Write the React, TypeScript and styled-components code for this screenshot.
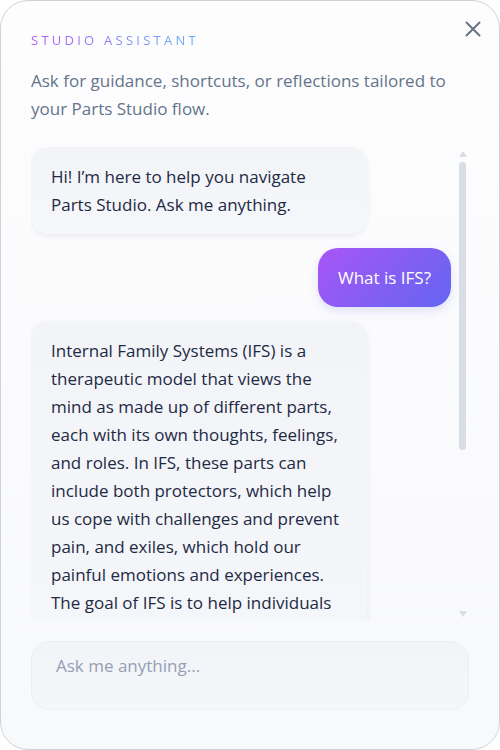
import styled, { createGlobalStyle } from "styled-components";
import { X } from "lucide-react";

const GlobalStyle = createGlobalStyle`
  html, body {
    margin: 0;
    padding: 0;
    background: #ffffff;
  }
  body {
    font-family: "Open Sans", "Noto Sans", sans-serif;
  }
  * {
    box-sizing: border-box;
  }
`;

const Panel = styled.section`
  position: relative;
  width: 500px;
  height: 750px;
  display: flex;
  flex-direction: column;
  padding: 30px 30px 39px;
  border: 1px solid #cfd3d9;
  border-radius: 28px;
  background: linear-gradient(180deg, #fdfdfe 0%, #f8f9fb 100%);
  overflow: hidden;
`;

const Header = styled.header`
  display: flex;
  flex-direction: column;
  gap: 18px;
`;

const Title = styled.h2`
  margin: 0;
  font-size: 13px;
  font-weight: 400;
  letter-spacing: 0.25em;
  line-height: 18px;
  text-transform: uppercase;
  background: linear-gradient(90deg, #b259f7 0%, #5fb2f8 100%);
  -webkit-background-clip: text;
  background-clip: text;
  color: transparent;
  width: fit-content;
`;

const Subtitle = styled.p`
  margin: 0;
  font-size: 17px;
  line-height: 28px;
  color: #64748b;
`;

const CloseButton = styled.button`
  position: absolute;
  top: 15px;
  right: 13px;
  width: 26px;
  height: 26px;
  padding: 0;
  border: none;
  background: none;
  color: #687385;
  display: flex;
  align-items: center;
  justify-content: center;
  cursor: pointer;
`;

const MessagesFrame = styled.div`
  position: relative;
  flex: 1;
  min-height: 0;
  margin-top: 24px;
  display: flex;
`;

const Messages = styled.div`
  flex: 1;
  padding-right: 18px;
  display: flex;
  flex-direction: column;
  gap: 14px;
  overflow-y: auto;
  scrollbar-width: none;
  &::-webkit-scrollbar {
    display: none;
  }
`;

const ScrollRail = styled.div`
  position: absolute;
  top: 4px;
  bottom: 4px;
  right: 2px;
  width: 9px;
  display: flex;
  flex-direction: column;
  align-items: center;
  pointer-events: none;
`;

const ScrollArrow = styled.span<{ $down?: boolean }>`
  width: 0;
  height: 0;
  border-left: 4.5px solid transparent;
  border-right: 4.5px solid transparent;
  ${(p) =>
    p.$down
      ? "border-top: 6px solid #d9dee6; margin-top: auto;"
      : "border-bottom: 6px solid #d9dee6;"}
`;

const ScrollThumb = styled.span`
  margin-top: 5px;
  width: 7px;
  height: 288px;
  border-radius: 4px;
  background: #d9dee6;
`;

const Bubble = styled.div<{ $mine?: boolean }>`
  flex-shrink: 0;
  max-width: 80%;
  align-self: ${(p) => (p.$mine ? "flex-end" : "flex-start")};
  padding: 16px 20px 15px;
  border-radius: ${(p) => (p.$mine ? "20px" : "18px")};
  font-size: 17px;
  line-height: 28px;
  color: ${(p) => (p.$mine ? "#ffffff" : "#1e2a44")};
  background: ${(p) =>
    p.$mine
      ? "linear-gradient(135deg, #a855f7 0%, #6366f1 100%)"
      : "linear-gradient(180deg, #f2f4f8 0%, #f5f7fa 100%)"};
  box-shadow: ${(p) =>
    p.$mine
      ? "0 4px 10px rgba(99, 102, 241, 0.18)"
      : "0 2px 6px rgba(30, 41, 59, 0.08)"};
`;

const Composer = styled.textarea`
  margin-top: 20px;
  height: 69px;
  width: 100%;
  resize: none;
  padding: 12px 24px;
  border: 1px solid #eceff3;
  border-radius: 18px;
  background: linear-gradient(180deg, #f2f4f7 0%, #f4f6f9 100%);
  font-family: inherit;
  font-size: 17px;
  line-height: 24px;
  color: #1e2a44;
  outline: none;

  &::placeholder {
    color: #94a0b4;
  }
`;

const messages = [
  { mine: false, text: "Hi! I’m here to help you navigate Parts Studio. Ask me anything." },
  { mine: true, text: "What is IFS?" },
  {
    mine: false,
    text:
      "Internal Family Systems (IFS) is a therapeutic model that views the mind as made up of different parts, each with its own thoughts, feelings, and roles. In IFS, these parts can include both protectors, which help us cope with challenges and prevent pain, and exiles, which hold our painful emotions and experiences. The goal of IFS is to help individuals develop a compassionate relationship with their parts, guided by the Self, so that healing and balance can emerge.",
  },
];

export default function App() {
  return (
    <>
      <GlobalStyle />
      <Panel>
        <CloseButton aria-label="Close">
          <X size={26} strokeWidth={1.8} />
        </CloseButton>
        <Header>
          <Title>Studio Assistant</Title>
          <Subtitle>
            Ask for guidance, shortcuts, or reflections tailored to your Parts
            Studio flow.
          </Subtitle>
        </Header>
        <MessagesFrame>
          <Messages>
            {messages.map((m, i) => (
              <Bubble key={i} $mine={m.mine}>
                {m.text}
              </Bubble>
            ))}
          </Messages>
          <ScrollRail aria-hidden>
            <ScrollArrow />
            <ScrollThumb />
            <ScrollArrow $down />
          </ScrollRail>
        </MessagesFrame>
        <Composer placeholder="Ask me anything..." />
      </Panel>
    </>
  );
}
